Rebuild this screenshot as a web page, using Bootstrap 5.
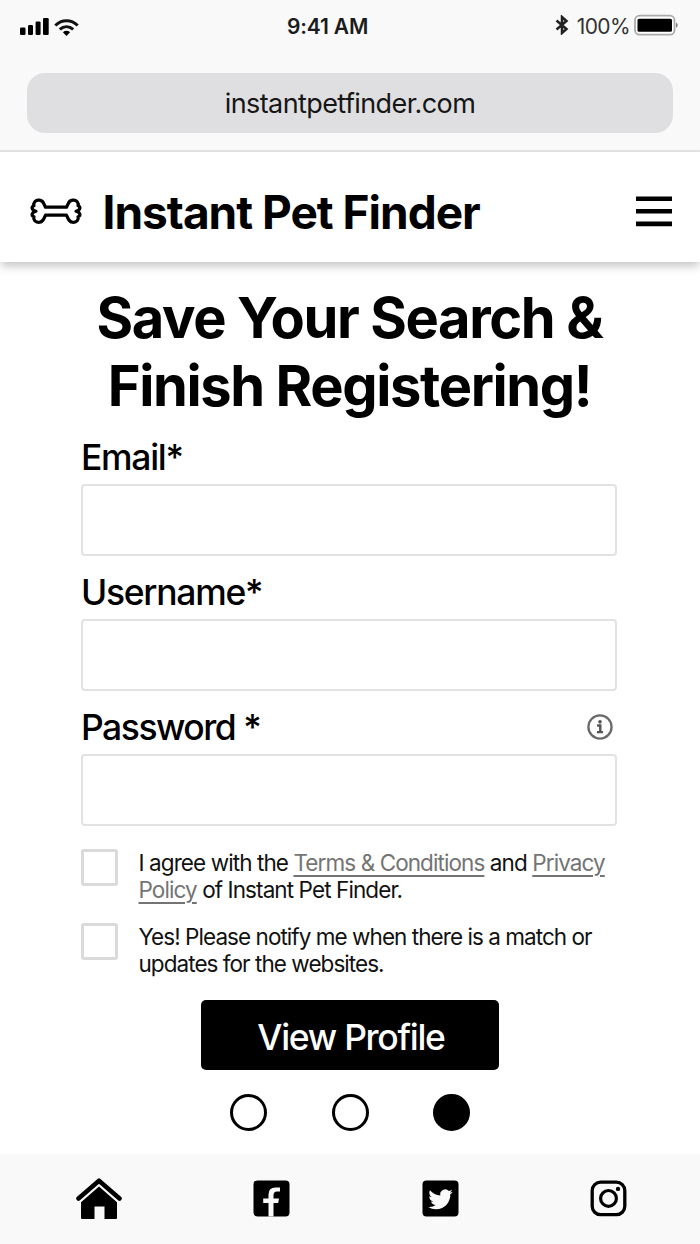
<!DOCTYPE html>
<html lang="en">
<head>
<meta charset="utf-8">
<meta name="viewport" content="width=device-width, initial-scale=1">
<title>Instant Pet Finder</title>
<link href="https://cdn.jsdelivr.net/npm/bootstrap@5.3.0/dist/css/bootstrap.min.css" rel="stylesheet">
<style>
  body { font-family: Inter, "Liberation Sans", sans-serif; color: #000; width: 700px; height: 1244px; overflow: hidden; background: #fff; }
  svg { display: block; }
  .browser-chrome { height: 152px; background: #f9f9f9; border-bottom: 2px solid #e4e4e4; padding: 0 27px; }
  .status-bar { display: grid; grid-template-columns: 267px auto 1fr; height: 54px; margin: 0 -7px; }
  .status-time { font-size: 21px; font-weight: 600; letter-spacing: -.15px; color: #1c1c1c; }
  .status-battery { font-size: 21px; letter-spacing: -.6px; color: #333; }
  .url-bar { margin-top: 19px; height: 60px; padding-top: 2px; border-radius: 18px; background: #dfdfe1; font-size: 27px; letter-spacing: -.6px; color: #161616; }
  .site-header { height: 110px; padding: 8px 28px 0 29px; box-shadow: 0 5px 9px -1px rgba(0,0,0,.24); }
  .site-name { font-size: 46px; font-weight: 700; letter-spacing: -1px; margin-left: 19.5px; padding-top: 1px; line-height: 1; }
  h1 { font-size: 56px; font-weight: 700; line-height: 68px; letter-spacing: -1.38px; margin: 22px 1px 0 0; white-space: nowrap; }
  .signup { width: 536px; margin-left: 81px; margin-top: 1px; }
  .field-label { font-size: 35.5px; font-weight: 500; line-height: 44px; height: 63px; padding-top: 15px; letter-spacing: -1.3px; margin: 0; }
  .field-label[for=pass] { letter-spacing: -1.5px; }
  .signup .form-control { height: 72px; border: 2px solid #e2e2e2; border-radius: 4px; }
  .consents { padding-top: 23px; }
  .consent { font-size: 22.5px; line-height: 27px; letter-spacing: -.95px; height: 74px; gap: 20.5px; color: #111; white-space: nowrap; }
  .consent:first-child { letter-spacing: -.91px; }
  .consent .form-check-input { width: 37px; height: 37px; border: 3px solid #dadada; border-radius: 3px; margin: 0; flex: none; }
  .consent a { color: #747474; text-underline-offset: 4px; text-decoration-thickness: 1.5px; }
  .btn-profile { width: 298px; height: 70px; margin-top: 3px; background: #000; color: #fff; border-radius: 5px; font-size: 35.5px; font-weight: 500; letter-spacing: -1.3px; line-height: 1; padding: 5px 0 0 2px; }
  .step { width: 37px; height: 37px; border: 3.5px solid #000; border-radius: 50%; }
  .step.current { background: #000; }
  .steps { gap: 64.5px; margin-top: 23.5px; }
  .tab-bar { height: 90px; background: #f9f9f9; padding: 0 73px 1px 76px; }
</style>
</head>
<body class="d-flex flex-column">
<div class="browser-chrome flex-shrink-0">
  <div class="status-bar align-items-center">
    <div class="d-flex align-items-center gap-1">
      <svg width="30" height="18" viewBox="0 0 30 18"><rect y="9.5" width="5.5" height="7.500" rx="1.2"/><rect x="8" y="7" width="5" height="10" rx="1.2"/><rect x="15.600" y="3.500" width="5" height="13.500" rx="1.2"/><rect x="23" width="5.700" height="17" rx="1.2"/></svg>
      <svg width="25" height="17" viewBox="0 0 25 17"><g fill="none" stroke="#111" stroke-width="3"><path d="M1.300 6.500C7.700.2 17.300.2 23.700 6.500"/><path d="M5.800 10.400c4-3.600 9.400-3.600 13.400 0"/></g><path d="M8.900 13.200c2.200-1.800 5-1.800 7.200 0L12.500 17z"/></svg>
    </div>
    <div class="status-time">9:41 AM</div>
    <div class="status-battery d-flex justify-content-end align-items-center">
      <svg class="mb-1" width="14" height="20" viewBox="0 0 14 20" fill="none" stroke="#222" stroke-width="2.500"><path d="M1.500 5.500 11.500 14l-4.500 4V2l4.500 4L1.500 14.500"/></svg>
      <span class="ms-2">100%</span>
      <svg class="ms-1 mb-1" width="46" height="22" viewBox="0 0 46 22"><rect x="1" y="1.700" width="39.500" height="19" rx="4.500" fill="#fff" stroke="#aaa" stroke-width="1.800"/><rect x="3.500" y="4.700" width="34.500" height="13" rx="1.500"/><path d="M42 8.500q3.400 2.700 0 5.500z" fill="#777"/></svg>
    </div>
  </div>
  <div class="url-bar d-flex align-items-center justify-content-center"><span>instantpetfinder.com</span></div>
</div>

<header class="site-header d-flex align-items-center flex-shrink-0">
  <svg width="54" height="28" viewBox="0 0 54 28" fill="none" stroke="#000" stroke-width="3.200" stroke-linejoin="round"><path d="M16.500 10.200H37.500L39.300 6.500C41 2.600 46 2.200 48.200 4.700C49.400 6.200 49.500 7.500 49 8.700C51.800 9.600 51.800 13 47 14.200C51.800 15.500 51.800 18.800 49 19.700C49.500 21 49.400 22.200 48.200 23.700C46 26.200 41 25.800 39.300 22L37.500 18.200H16.500L14.700 22C13 25.800 8 26.200 5.800 23.700C4.600 22.200 4.500 21 5 19.700C2.200 18.800 2.200 15.500 7 14.200C2.200 13 2.200 9.600 5 8.700C4.500 7.500 4.600 6.200 5.800 4.700C8 2.200 13 2.600 14.700 6.500Z"/></svg>
  <div class="site-name">Instant Pet Finder</div>
  <svg class="ms-auto" width="36" height="32" viewBox="0 0 36 32"><path d="M0 3.700h36M0 16.200h36M0 28.900h36" stroke="#000" stroke-width="4.600"/></svg>
</header>

<main>
  <h1 class="text-center">Save Your Search &amp;<br>Finish Registering!</h1>
  <form class="signup">
    <label class="field-label d-block" for="email">Email*</label>
    <input class="form-control" id="email" type="email">
    <label class="field-label d-block" for="user">Username*</label>
    <input class="form-control" id="user" type="text">
    <div class="d-flex justify-content-between align-items-center">
      <label class="field-label" for="pass">Password *</label>
      <svg class="mt-2 me-1" width="27" height="27" viewBox="0 0 28 28"><circle cx="14.500" cy="14.500" r="12" fill="none" stroke="#6a6a6a" stroke-width="2.400"/><circle cx="14.500" cy="9.200" r="1.900" fill="#555"/><path d="M11.500 13h3.300V19.500M11.300 19.800h6.400" fill="none" stroke="#555" stroke-width="2.500"/></svg>
    </div>
    <input class="form-control" id="pass" type="password">
    <div class="consents">
      <div class="consent d-flex">
        <input class="form-check-input" type="checkbox" id="terms">
        <label for="terms">I agree with the <a href="#">Terms &amp; Conditions</a> and <a href="#">Privacy</a><br><a href="#">Policy</a> of Instant Pet Finder.</label>
      </div>
      <div class="consent d-flex">
        <input class="form-check-input" type="checkbox" id="notify">
        <label for="notify">Yes! Please notify me when there is a match or<br>updates for the websites.</label>
      </div>
    </div>
  </form>
  <div class="text-center"><button class="btn btn-profile">View Profile</button></div>
  <div class="steps d-flex justify-content-center"><span class="step"></span><span class="step"></span><span class="step current"></span></div>
</main>

<nav class="tab-bar mt-auto d-flex align-items-center justify-content-between flex-shrink-0">
  <svg width="46" height="42" viewBox="0 0 46 42"><path d="M2.500 20.500 23 2.700l20.500 17.800" fill="none" stroke="#000" stroke-width="4.500" stroke-linecap="round" stroke-linejoin="round"/><path d="M5 24.300 23 8.600l18 15.700V40q0 1-1 1H28.500V28.500h-10V41H6q-1 0-1-1z"/></svg>
  <svg width="37" height="37" viewBox="0 0 37 37"><rect x=".5" y=".4" width="36" height="36" rx="4"/><path d="M15.500 36.500V23h-5.300v-4.500h5.300v-4q0-7 7-7H27v4h-3q-3.500 0-3.500 3.800v3.200H26l-.8 4.500h-4.700V36.500z" fill="#f9f9f9"/></svg>
  <svg width="37" height="37" viewBox="0 0 37 37"><rect x=".5" y=".4" width="36" height="36" rx="4"/><path transform="translate(6.300 6.300) scale(1.530)" fill="#f9f9f9" d="M5.026 15c6.038 0 9.341-5.003 9.341-9.334 0-.140 0-.282-.006-.422A6.685 6.685 0 0 0 16 3.542a6.658 6.658 0 0 1-1.889.518 3.301 3.301 0 0 0 1.447-1.817 6.533 6.533 0 0 1-2.087.793A3.286 3.286 0 0 0 7.875 6.030a9.325 9.325 0 0 1-6.767-3.429 3.289 3.289 0 0 0 1.018 4.382A3.323 3.323 0 0 1 .640 6.575v.045a3.288 3.288 0 0 0 2.632 3.218 3.203 3.203 0 0 1-.865.115 3.230 3.230 0 0 1-.614-.057 3.283 3.283 0 0 0 3.067 2.277A6.588 6.588 0 0 1 .780 13.580a6.320 6.320 0 0 1-.780-.045A9.344 9.344 0 0 0 5.026 15z"/></svg>
  <svg width="37" height="37" viewBox="0 0 37 37" fill="none" stroke="#000"><rect x="2.200" y="2.100" width="32.600" height="32.600" rx="8.500" stroke-width="3.300"/><circle cx="18.500" cy="18.400" r="7.900" stroke-width="3.200"/><circle cx="28" cy="8.900" r="2.200" fill="#000" stroke="none"/></svg>
</nav>
<script src="https://cdn.jsdelivr.net/npm/bootstrap@5.3.0/dist/js/bootstrap.bundle.min.js"></script>
</body>
</html>
